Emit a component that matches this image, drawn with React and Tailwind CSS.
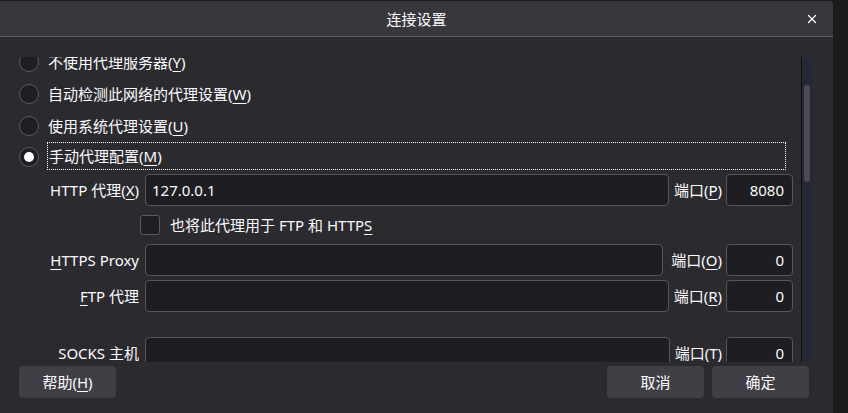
import { X } from "lucide-react";

const font = { fontFamily: '"Noto Sans", "Noto Sans CJK SC", sans-serif' };

// mnemonic letter
function K({ children }) {
  return <span className="underline decoration-1 underline-offset-[3px]">{children}</span>;
}

function Radio({ checked }) {
  return (
    <div className="flex h-[20px] w-[20px] shrink-0 items-center justify-center rounded-full border border-[#5c5b62] bg-[#1f1e23]">
      {checked && <div className="h-[10px] w-[10px] rounded-full bg-white" />}
    </div>
  );
}

function Field({ value, right }) {
  return (
    <div
      className={`flex h-[32px] items-center rounded-[4px] border border-[#56555b] bg-[#1e1d22] ${
        right ? "w-[67px] shrink-0 justify-end pr-[8px]" : "flex-1 pl-[6px]"
      }`}
    >
      {value}
    </div>
  );
}

function ProxyRow({ label, port, portKey, value, className = "" }) {
  return (
    <div className={`flex h-[32px] items-center pl-[40px] pr-[8px] ${className}`}>
      <div className="w-[99px] shrink-0 text-right whitespace-nowrap">{label}</div>
      <div className="w-[6px] shrink-0" />
      <Field value={value} />
      <div className="ml-[5px] mr-[4px] whitespace-nowrap">
        端口(<K>{portKey}</K>)
      </div>
      <Field value={port} right />
    </div>
  );
}

export default function App() {
  const radios = [
    { label: "不使用代理服务器", key: "Y" },
    { label: "自动检测此网络的代理设置", key: "W" },
    { label: "使用系统代理设置", key: "U" },
  ];

  return (
    <div className="flex h-[413px] w-[848px] overflow-hidden bg-[#1b1b1d] text-[15px] leading-[20px] text-[#fbfbfe]" style={font}>
      {/* Dialog */}
      <div className="flex w-[833px] flex-col border-t border-[#1d1d20] bg-[#2b2a2f] rounded-tr-[4px] overflow-hidden">
        {/* Title bar */}
        <div className="flex h-[36px] shrink-0 items-center border-b border-[#5d5c62] bg-[#38373c]">
          <div className="w-[40px]" />
          <div className="flex-1 text-center">连接设置</div>
          <div className="flex w-[40px] items-center justify-center pr-[2px]">
            <X size={14} strokeWidth={2.2} className="text-white" />
          </div>
        </div>

        {/* Body */}
        <div className="flex flex-1 flex-col pt-[20px]">
          <div className="flex h-[305px] pr-[20px]">
            {/* scroll viewport */}
            <div className="flex-1 overflow-hidden">
              <div className="-mt-[11px]">
                {radios.map((r) => (
                  <div key={r.key} className="flex h-[32px] items-center pl-[19px]">
                    <Radio />
                    <div className="ml-[9px]">
                      {r.label}(<K>{r.key}</K>)
                    </div>
                  </div>
                ))}
                <div className="flex h-[32px] items-start pl-[19px] pr-[15px]">
                  <div className="mt-[5px]">
                    <Radio checked />
                  </div>
                  <div className="ml-[8px] flex h-[28px] flex-1 items-center border border-dotted border-white pl-px">
                    手动代理配置(<K>M</K>)
                  </div>
                </div>

                <ProxyRow
                  label={<>HTTP 代理(<K>X</K>)</>}
                  value="127.0.0.1"
                  port="8080"
                  portKey="P"
                />

                <div className="flex h-[38px] items-center pl-[140px]">
                  <div className="h-[20px] w-[20px] rounded-[3px] border border-[#5b5a60] bg-[#1f1e23]" />
                  <div className="ml-[10px]">
                    也将此代理用于 FTP 和 HTTP<K>S</K>
                  </div>
                </div>

                <ProxyRow
                  label={<><K>H</K>TTPS Proxy</>}
                  value=""
                  port="0"
                  portKey="O"
                  className="[&>*:nth-child(3)]:mr-[3px]"
                />
                <ProxyRow
                  label={<><K>F</K>TP 代理</>}
                  value=""
                  port="0"
                  portKey="R"
                  className="mt-[4px]"
                />
                <ProxyRow
                  label={<>SO<K>C</K>KS 主机</>}
                  value=""
                  port="0"
                  portKey="T"
                  className="mt-[25px]"
                />
              </div>
            </div>
            {/* scrollbar */}
            <div className="w-[12px] shrink-0 border-l border-[#0e0e10] bg-[#272835] pl-[2px] pt-[28px]">
              <div className="h-[97px] w-[6px] rounded-full bg-[#4a4b55]" />
            </div>
          </div>

          {/* Footer */}
          <div className="flex flex-1 items-start pl-[19px] pr-[24px] pt-[4px]">
            <button className="flex h-[32px] w-[97px] items-center justify-center rounded-[4px] bg-[#403f45]">
              帮助(<K>H</K>)
            </button>
            <div className="flex-1" />
            <button className="flex h-[32px] w-[97px] items-center justify-center rounded-[4px] bg-[#403f45]">
              取消
            </button>
            <button className="ml-[8px] flex h-[32px] w-[97px] items-center justify-center rounded-[4px] bg-[#403f45]">
              确定
            </button>
          </div>
        </div>
      </div>
    </div>
  );
}
